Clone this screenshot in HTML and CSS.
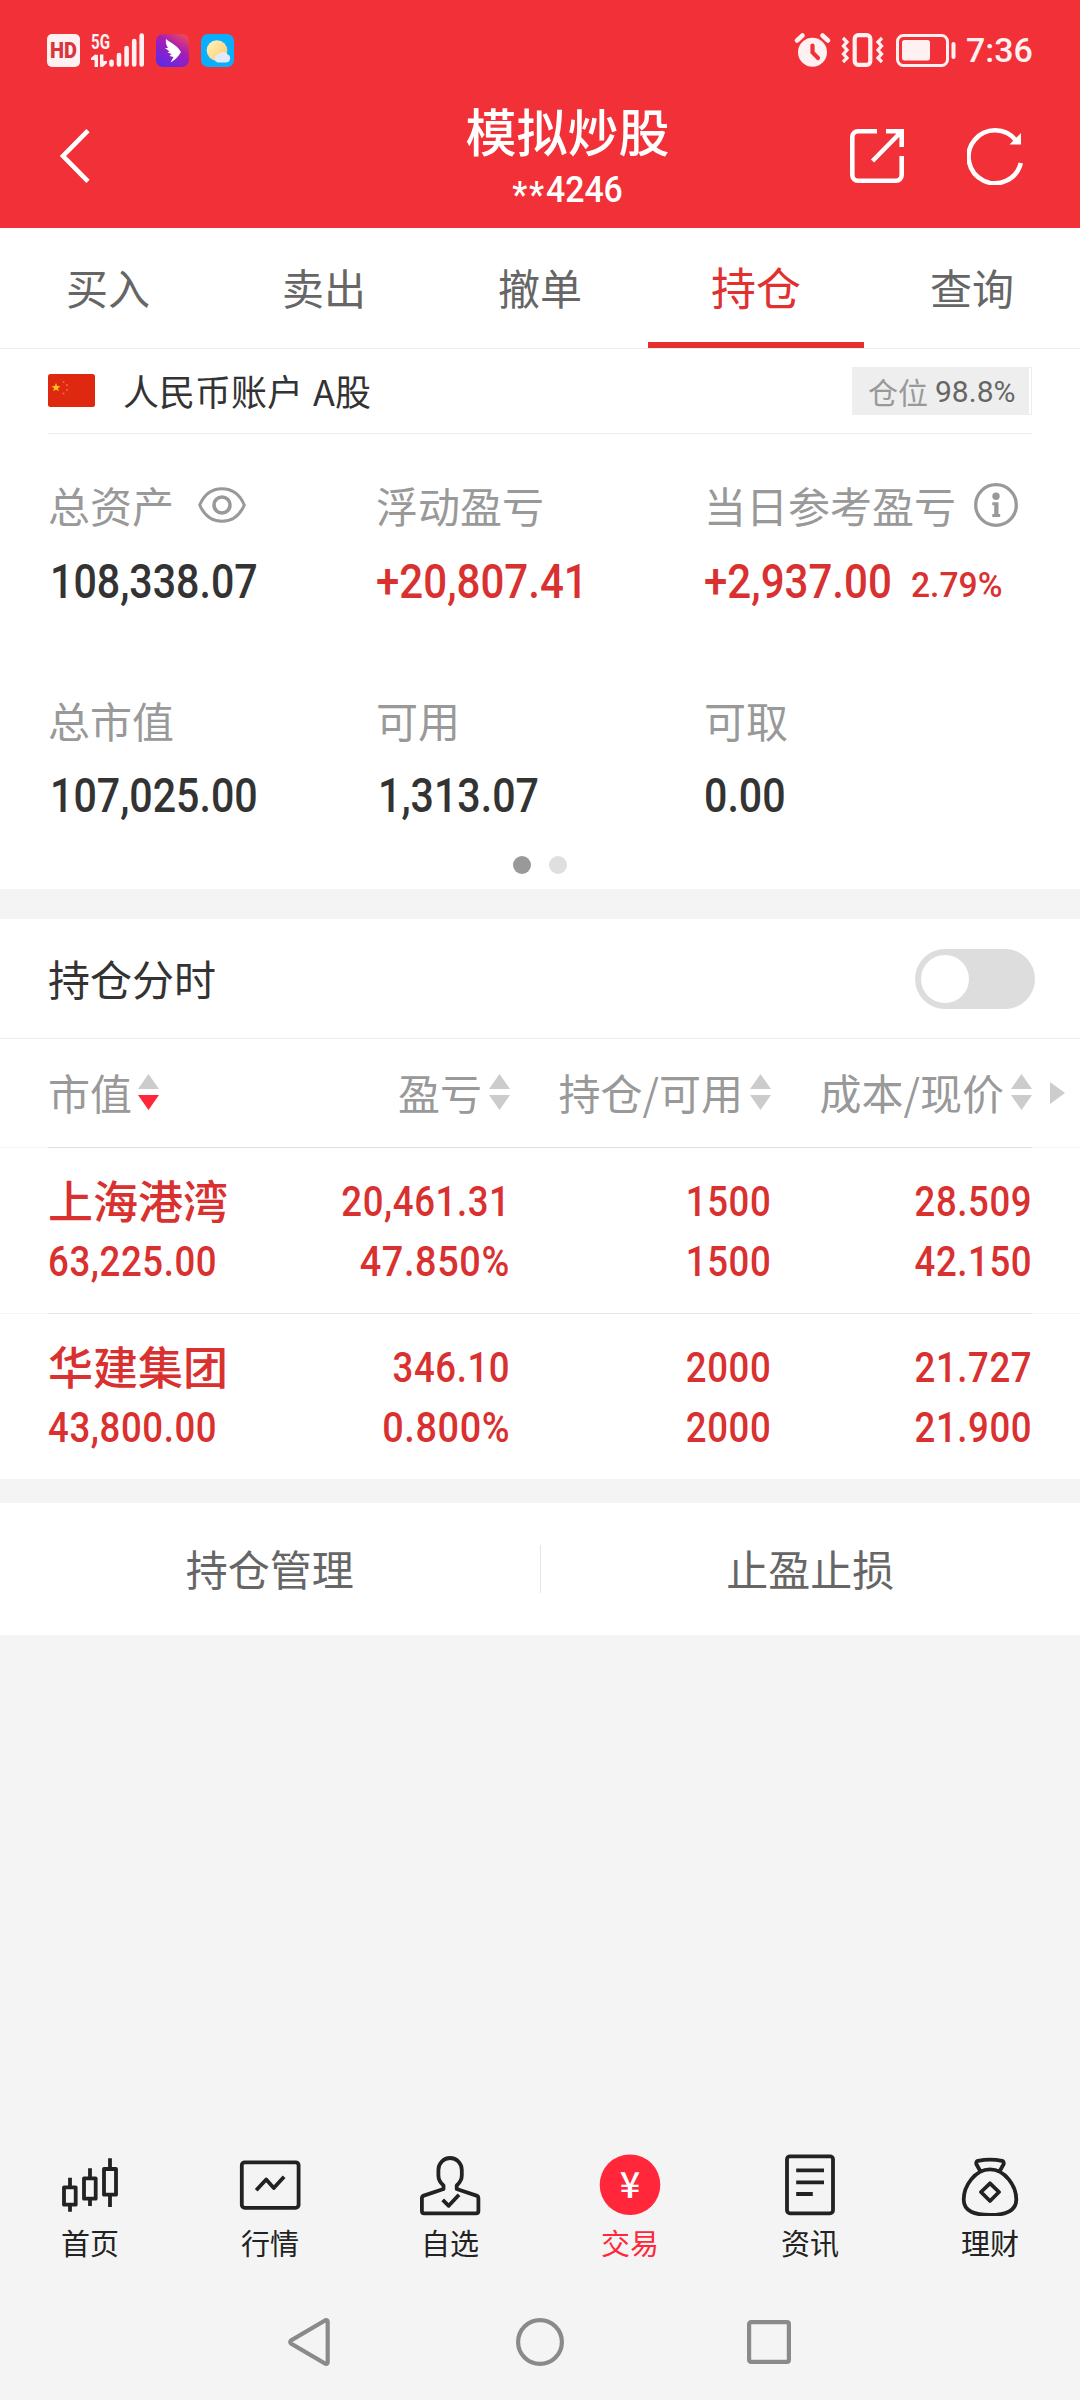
FILE: index.html
```html
<!DOCTYPE html>
<html lang="zh-CN">
<head>
<meta charset="utf-8">
<title>模拟炒股</title>
<link rel="stylesheet" href="styles.css">
</head>
<body>
<div class="app">
  <header class="top">
    <div class="status">
      <svg class="st-hd" width="33" height="33" viewBox="0 0 33 33"><rect width="33" height="33" rx="5" fill="#fff1f2"/><text x="3" y="24" font-size="21.5" font-weight="900" class="rb" fill="#d8363c" textLength="27" lengthAdjust="spacingAndGlyphs">HD</text></svg>
      <svg class="st-sig" width="53" height="34" viewBox="0 0 53 34" fill="#fff1f2">
        <text x="0" y="15.5" font-size="20" font-weight="700" class="rb" textLength="19" lengthAdjust="spacingAndGlyphs">5G</text>
        <path d="M7 22v12H3.600V27H0v-2l4-3.500z M9 21.500h3.400V28H16v2l-4 3.700H9z"/>
        <g stroke="#fff1f2" stroke-width="4.600" stroke-linecap="round"><path d="M20.500 28.800v2.700M28 22v9.500M35.600 15v16.500M43.200 8v23.500M50.700 2.500v29"/></g>
      </svg>
      <svg class="st-app" width="33" height="33" viewBox="0 0 33 33"><defs><linearGradient id="g1" x1=".2" y1="1" x2=".85" y2="0"><stop offset="0" stop-color="#5b2ae8"/><stop offset=".6" stop-color="#a61db4"/><stop offset="1" stop-color="#f0485c"/></linearGradient></defs><rect width="33" height="33" rx="7" fill="url(#g1)"/><path fill="#fff" d="M10 5C15 9 22 12 25 18 22 23 19 26 14.500 28.500L17.500 23 13.500 22 15.500 20 11.500 18.500 13.500 17.500 9 14 12 14C10 11 9.500 8 10 5z"/></svg>
      <svg class="st-app" width="33" height="33" viewBox="0 0 33 33"><defs><linearGradient id="g2" x1="0" y1="0" x2="1" y2="1"><stop offset="0" stop-color="#fff4c8"/><stop offset="1" stop-color="#ffc95c"/></linearGradient></defs><rect width="33" height="33" rx="7" fill="#0aaeff"/><circle cx="16" cy="16.500" r="10.300" fill="url(#g2)"/><path fill="#e3e9fb" d="M16.500 28.500a4 4 0 0 1-.8-7.500 3 3 0 0 1 3-1.500 5 5 0 0 1 8 1 4.200 4.200 0 0 1-2 8z"/></svg>
      <span class="grow"></span>
      <svg width="35" height="34" viewBox="0 0 35 34"><circle cx="17.500" cy="19.300" r="14.500" fill="#fff1f2"/><path d="M2 7.500L7.500 2.500M33 7.500L27.500 2.500" stroke="#fff1f2" stroke-width="4.600" stroke-linecap="round"/><path d="M17.500 12.500V19.500L23 25" fill="none" stroke="#f13038" stroke-width="4.200" stroke-linecap="round"/></svg>
      <svg class="st-vib" width="41" height="34" viewBox="0 0 41 34" fill="none" stroke="#fff1f2"><rect x="12.700" y="2.200" width="15.600" height="29.600" rx="3.500" stroke-width="4.200"/><path d="M1 5l4 4-3.500 4L5 17l-3.500 4L5 25l-4 4M40 5l-4 4 3.500 4L36 17l3.500 4L36 25l4 4" stroke-width="3.300"/></svg>
      <svg class="st-bat" width="60" height="33" viewBox="0 0 60 33"><rect x="1.500" y="1.500" width="50" height="30" rx="6" fill="none" stroke="#fff1f2" stroke-width="3"/><rect x="6" y="6" width="28" height="20.500" rx="2.500" fill="#fff1f2"/><rect x="55.500" y="8" width="4" height="17" rx="2" fill="#fff1f2"/></svg>
      <span class="time">7:36</span>
    </div>
    <div class="titlebar">
      <svg width="30" height="54" viewBox="0 0 30 54" fill="none" stroke="#fff" stroke-width="4.600"><path d="M28 1.600L3 27 28 52.400"/></svg>
      <div class="title"><h1>模拟炒股</h1><p class="num n-acct"><span class="mask">**</span>4246</p></div>
      <svg width="54" height="54" viewBox="0 0 54 54" fill="none" stroke="#fff" stroke-width="4.600"><path d="M27 2.300H8A5.700 5.700 0 0 0 2.300 8V46A5.700 5.700 0 0 0 8 51.700H46A5.700 5.700 0 0 0 51.700 46V27M36 2.300H51.700V18M51 3L22.500 32"/></svg>
      <svg class="refresh" width="57" height="58" viewBox="0 0 57 58"><path d="M49 13.500A26.500 26.500 0 1 0 53.800 36" fill="none" stroke="#fff" stroke-width="4.600"/><path d="M54 6V17.500H42.500z" fill="#fff"/></svg>
    </div>
  </header>

  <nav class="tabs"><a>买入</a><a>卖出</a><a>撤单</a><a class="on">持仓</a><a>查询</a></nav>

  <section class="account">
    <svg width="47" height="33" viewBox="0 0 47 33"><rect width="47" height="33" rx="2.500" fill="#de2910"/><path fill="#ffc21a" d="M8 9l1.200 3 3.200.2-2.500 2 .9 3.100L8 15.500l-2.800 1.800.9-3.100-2.500-2 3.200-.2z"/><g fill="#f0672a"><circle cx="15.500" cy="8" r="1.100"/><circle cx="19" cy="11" r="1.100"/><circle cx="19" cy="16" r="1.100"/><circle cx="15.500" cy="19.500" r="1.100"/></g></svg>
    <span class="acct-name">人民币账户 A股</span>
    <span class="grow"></span>
    <span class="badge"><i>仓位</i><b>98.8%</b></span>
  </section>

  <section class="stats">
    <dl><dt>总资产<svg class="eye" width="48" height="36" viewBox="0 0 48 36" fill="none" stroke="#999" stroke-width="3"><path d="M1.700 18C6 8 14 1.800 24 1.800S42 8 46.300 18C42 28 34 34.200 24 34.200S6 28 1.700 18z"/><circle cx="24" cy="18" r="8" stroke-width="3.600"/></svg></dt><dd class="pad"><span class="num n-big">108,338.07</span></dd></dl>
    <dl><dt>浮动盈亏</dt><dd><span class="num n-big red">+20,807.41</span></dd></dl>
    <dl><dt>当日参考盈亏<svg class="info" width="44" height="44" viewBox="0 0 44 44" fill="#999"><circle cx="22" cy="22" r="20.300" fill="none" stroke="#999" stroke-width="3.300"/><circle cx="22" cy="13.200" r="3.700"/><path d="M18.300 19.300h6.200v11.800h1.700v3h-7.900v-3h1.900v-8.800h-1.900z"/></svg></dt><dd><span class="num n-big red">+2,937.00</span><span class="num n-pct red">2.79%</span></dd></dl>
    <dl><dt>总市值</dt><dd class="pad"><span class="num n-big">107,025.00</span></dd></dl>
    <dl><dt>可用</dt><dd class="pad"><span class="num n-big">1,313.07</span></dd></dl>
    <dl><dt>可取</dt><dd><span class="num n-big">0.00</span></dd></dl>
    <div class="dots"><i class="on"></i><i></i></div>
  </section>

  <section class="toggle"><span>持仓分时</span><span class="switch"><i></i></span></section>

  <section class="table">
    <div class="thead">
      <span>市值<svg class="sort" width="21" height="36" viewBox="0 0 21 36"><path d="M10.500 0L21 15H0z" fill="#ccc"/><path d="M10.500 36L21 21H0z" fill="#ff2739"/></svg></span>
      <span>盈亏<svg class="sort" width="21" height="36" viewBox="0 0 21 36"><path d="M10.500 0L21 15H0zM10.500 36L21 21H0z" fill="#ccc"/></svg></span>
      <span>持仓/可用<svg class="sort" width="21" height="36" viewBox="0 0 21 36"><path d="M10.500 0L21 15H0zM10.500 36L21 21H0z" fill="#ccc"/></svg></span>
      <span>成本/现价<svg class="sort" width="21" height="36" viewBox="0 0 21 36"><path d="M10.500 0L21 15H0zM10.500 36L21 21H0z" fill="#ccc"/></svg></span>
      <svg class="more" width="15" height="22" viewBox="0 0 15 22"><path d="M0 0L15 11 0 22z" fill="#ccc"/></svg>
    </div>
    <div class="row">
      <strong>上海港湾</strong><span class="num n-row">20,461.31</span><span class="num n-row">1500</span><span class="num n-row">28.509</span>
      <span class="num n-row">63,225.00</span><span class="num n-row rate">47.850%</span><span class="num n-row">1500</span><span class="num n-row">42.150</span>
    </div>
    <div class="row last">
      <strong>华建集团</strong><span class="num n-row">346.10</span><span class="num n-row">2000</span><span class="num n-row">21.727</span>
      <span class="num n-row">43,800.00</span><span class="num n-row rate">0.800%</span><span class="num n-row">2000</span><span class="num n-row">21.900</span>
    </div>
  </section>

  <section class="actions"><a>持仓管理</a><i></i><a>止盈止损</a></section>

  <nav class="bottom">
    <a><svg width="64" height="64" viewBox="0 0 64 64"><path d="M6 35.300h11.700v17.400H6zM12 25.700v9.600M12 52.700v7M26 26.300h11.700v20.400H26zM32 16.300v10M32 46.700V54M46 17h12v25.700H46zM52 6.300V17M52 42.700V55"/></svg>首页</a>
    <a><svg width="64" height="64" viewBox="0 0 64 64"><rect x="3.800" y="10.300" width="56.800" height="45.500" rx="3"/><path d="M18.200 38.300L28.200 27.500 35.800 36 46.100 24.700"/></svg>行情</a>
    <a><svg width="64" height="64" viewBox="0 0 64 64"><path d="M25.500 37V33.500C22 30.500 20.400 27 20.400 23.500V18A11.700 12 0 0 1 43.800 18V23.500C43.800 27 42 30.500 38.700 33.500V37L58.500 43.600Q60.400 44.400 60.400 46.500V59Q60.400 61.300 58 61.300H6.200Q3.900 61.300 3.900 59V46.500Q3.900 44.400 5.800 43.600L25.500 37V33M24.700 47.800L30.700 53.800 41 42.700"/></svg>自选</a>
    <a class="on"><svg width="64" height="64" viewBox="0 0 64 64"><circle cx="32" cy="32.800" r="30.300"/><text x="32" y="46" text-anchor="middle" class="yen">¥</text></svg>交易</a>
    <a><svg width="64" height="64" viewBox="0 0 64 64"><rect x="9" y="4.300" width="46" height="57" rx="3"/><path d="M18.200 18.300H46M18.200 30.300H46M18.200 42H34.800"/></svg>资讯</a>
    <a><svg width="64" height="64" viewBox="0 0 64 64"><path d="M32 17.300C47 17.300 58.300 34 58.300 47.500C58.300 59.500 47 63 32 63S5.700 59.500 5.700 47.500C5.700 34 17 17.300 32 17.300zM22.500 19.500L18.300 12Q18 9.400 20 8.800Q32 6.300 44 8.800Q46 9.400 45.700 12L41.500 19.500M32 31.300L41 40 32 49 23 40z"/></svg>理财</a>
  </nav>
  <div class="sysnav">
    <svg width="42" height="48" viewBox="0 0 42 48"><path d="M37.500 2.300Q39.700 1.800 39.700 4V44Q39.700 46.200 37.500 45.700L3 25.500Q1.400 24 3 22.500z"/></svg>
    <svg width="48" height="48" viewBox="0 0 48 48"><circle cx="24" cy="24" r="21.900"/></svg>
    <svg width="44" height="44" viewBox="0 0 44 44"><rect x="2.100" y="2.100" width="39.800" height="39.800" rx="2"/></svg>
  </div>
</div>
</body>
</html>
```
FILE: styles.css
```css
* { box-sizing: border-box; margin: 0; padding: 0; }
body { background: #f4f4f4; font-family: "Noto Sans CJK SC", sans-serif; color: #333; }
svg { display: block; flex: none; }
i, b { font-style: normal; font-weight: 400; }
.grow { flex: 1; }
.rb { font-family: Roboto, sans-serif; }
.app { width: 1080px; height: 2400px; display: flex; flex-direction: column; overflow: hidden; }

/* Red header */
.top { height: 228px; background: #f13038; color: #fff; }
.status { height: 100px; padding: 0 48px 0 47px; display: flex; align-items: center; }
.status svg { overflow: visible; }
.st-sig { margin-left: 11px; }
.st-app { margin-left: 12px; }
.st-vib { margin-left: 12px; }
.st-bat { margin: 0 10px 0 13px; }
.time { width: 66px; font: 500 34px/40px Roboto, sans-serif; color: #fff1f2; white-space: nowrap; }
.titlebar { height: 112px; padding: 0 56px 0 60px; display: flex; align-items: center; }
.title { flex: 1; height: 112px; margin-left: 195px; text-align: center; }
.title h1 { font-size: 51px; line-height: 61px; font-weight: 500; }
.title p { line-height: 58px; }
.mask { display: inline-block; line-height: 40px; letter-spacing: 2px; transform: translateY(5px); }
.refresh { margin-left: 63px; }

/* Condensed numerals */
.num { display: inline-block; font-family: Roboto, sans-serif; font-weight: 500; white-space: nowrap; transform-origin: 0 50%; }
.num.n-acct { display: block; font-size: 36px; transform: scaleX(.94); transform-origin: 50% 50%; }
.n-big { font-size: 48px; transform: scaleX(.857); }
.n-big.red { transform: scaleX(.876); }
.n-pct { font-size: 35px; transform: scaleX(.96); }
.n-row { font-size: 42px; letter-spacing: .7px; transform: scaleX(.87); }
.n-row.rate { transform: scaleX(.9); }
.red { color: #d93030; }

/* Trade tabs */
.tabs { height: 121px; background: #fff; border-bottom: 1px solid #ededed; display: grid; grid-template-columns: repeat(5, 1fr); }
.tabs a { height: 120px; text-align: center; font-size: 42px; line-height: 118px; color: #666; }
.tabs .on { font-size: 45px; color: #e03030; border-bottom: 6px solid #e63030; }

/* Account strip */
.account { height: 85px; padding: 0 48px 2px; background: #fff linear-gradient(#ededed, #ededed) no-repeat 48px 100% / 984px 1px; display: flex; align-items: center; }
.acct-name { margin-left: 28px; font-size: 36px; line-height: 50px; padding-bottom: 2px; word-spacing: 2px; }
.badge { width: 180px; height: 48px; padding-left: 15px; border: 1px solid #eee; background: linear-gradient(#eee, #eee) no-repeat 0 0 / 176px 100%; display: flex; align-items: center; gap: 7px; line-height: 44px; }
.badge i { font-size: 30px; color: #999; }
.badge b { padding-top: 2px; font-family: Roboto, sans-serif; font-size: 30px; color: #666; }

/* Asset figures */
.stats { height: 455px; padding: 31px 0 0 48px; background: #fff; display: grid; grid-template-columns: 328px 328px 1fr; grid-template-rows: 215px 176px 32px; }
.stats dt { height: 80px; display: flex; align-items: center; font-size: 42px; line-height: 80px; color: #999; white-space: nowrap; }
.stats dd { height: 72px; line-height: 72px; display: flex; align-items: center; }
.stats .pad { padding-left: 2px; }
.eye { margin-left: 24px; }
.info { margin-left: 18px; }
.stats dl:nth-child(-n + 3) .n-big { padding-top: 2px; }
.stats .n-pct { margin-left: -7px; padding-top: 10px; }
.dots { grid-column: 1 / 4; margin-left: -48px; display: flex; justify-content: center; gap: 18px; }
.dots i { width: 18px; height: 18px; border-radius: 50%; background: #dfdfdf; }
.dots .on { background: #999; }

/* Intraday switch */
.toggle { height: 120px; margin-top: 30px; padding: 0 45px 0 48px; background: #fff; border-bottom: 1px solid #ededed; display: flex; align-items: center; justify-content: space-between; font-size: 42px; }
.toggle span:first-child { padding-bottom: 2px; }
.switch { width: 120px; height: 60px; padding: 6px; border-radius: 30px; background: #ddd; }
.switch i { display: block; width: 48px; height: 48px; border-radius: 50%; background: #fff; }

/* Holdings */
.thead, .row { background: #fff linear-gradient(90deg, #f4f4f4 48px, #e6e6e6 48px 1032px, #f4f4f4 1032px) no-repeat 0 100% / 100% 1px; }
.thead { height: 109px; padding: 0 15px 0 48px; display: grid; grid-template-columns: 201px 261px 261px 261px 33px; align-items: center; justify-items: end; font-size: 42px; line-height: 105px; color: #999; background-image: linear-gradient(90deg, #f4f4f4 48px, #dfdfdf 48px 1032px, #f4f4f4 1032px); }
.thead span { display: flex; align-items: center; gap: 7px; white-space: nowrap; height: 105px; margin-bottom: 4px; }
.thead span:first-child { justify-self: start; gap: 6px; }
.more { margin-bottom: 2px; }
.row { height: 166px; padding: 24px 48px 0; display: grid; grid-template-columns: 201px 261px 261px 261px; grid-template-rows: 60px 60px; justify-items: end; line-height: 60px; color: #d93030; }
.last { background-image: linear-gradient(#f4f4f4, #f4f4f4); }
.row strong { font-size: 45px; font-weight: 500; line-height: 55px; }
.row > :nth-child(4n + 1) { justify-self: start; white-space: nowrap; }
.row .n-row { transform-origin: 100% 50%; }
.row .n-row:nth-child(4n + 1) { transform-origin: 0 50%; }

.actions { height: 132px; margin-top: 23px; background: #fff; display: flex; align-items: center; }
.actions a { flex: 1; padding-bottom: 4px; text-align: center; font-size: 42px; color: #666; }
.actions i { width: 1px; height: 48px; background: #e5e5e5; }

/* Bottom navigation */
.bottom { margin-top: auto; height: 134px; display: grid; grid-template-columns: repeat(6, 1fr); }
.bottom a { display: flex; flex-direction: column; align-items: center; gap: 6px; font-size: 29px; line-height: 40px; color: #222; }
.bottom svg { fill: none; stroke: #222; stroke-width: 3.8px; stroke-linejoin: round; }
.bottom .on { color: #ff2739; }
.bottom .on svg { fill: #ff2739; stroke: none; }
.bottom .yen { fill: #fff; font: 500 36px "Noto Sans CJK SC", sans-serif; }
.sysnav { height: 114px; padding: 0 0 2px 288px; display: flex; align-items: center; }
.sysnav svg { fill: none; stroke: #8a8a8a; stroke-width: 4.2px; }
.sysnav svg:nth-child(2) { margin: 0 183px 0 186px; }
```
